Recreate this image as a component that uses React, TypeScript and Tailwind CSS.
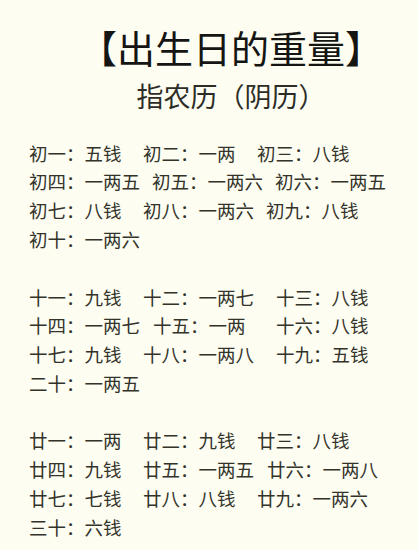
const font = { fontFamily: '"Noto Sans CJK SC", "Noto Sans", sans-serif' };

type Entry = [string, number];

const sections: Entry[][][] = [
  [
    [["初一：五钱", 114], ["初二：一两", 114], ["初三：八钱", 0]],
    [["初四：一两五", 123], ["初五：一两六", 123], ["初六：一两五", 0]],
    [["初七：八钱", 114], ["初八：一两六", 123], ["初九：八钱", 0]],
    [["初十：一两六", 0]],
  ],
  [
    [["十一：九钱", 114], ["十二：一两七", 133], ["十三：八钱", 0]],
    [["十四：一两七", 124], ["十五：一两", 123], ["十六：八钱", 0]],
    [["十七：九钱", 114], ["十八：一两八", 133], ["十九：五钱", 0]],
    [["二十：一两五", 0]],
  ],
  [
    [["廿一：一两", 114], ["廿二：九钱", 114], ["廿三：八钱", 0]],
    [["廿四：九钱", 114], ["廿五：一两五", 124], ["廿六：一两八", 0]],
    [["廿七：七钱", 114], ["廿八：八钱", 114], ["廿九：一两六", 0]],
    [["三十：六钱", 0]],
  ],
];

export default function App() {
  return (
    <div className="h-[550px] w-[418px] overflow-hidden bg-[#fdfdf1] text-[#33332b]" style={font}>
      <div className="pl-[44px]">
        <h1 className="pt-[22px] text-center text-[38px] leading-[50px] font-normal text-[#151513]">【出生日的重量】</h1>
        <h2 className="mt-[2px] text-center text-[27px] leading-[44px] text-[#2d2d28]">指农历（阴历）</h2>
      </div>

      <div className="mt-[21px] flex flex-col gap-[28.8px] pl-[29px]">
        {sections.map((rows, si) => (
          <div key={si} className="flex flex-col">
            {rows.map((row, ri) => (
              <div key={ri} className="flex h-[28.8px] items-center text-[18.5px] whitespace-nowrap">
                {row.map(([text, width], ei) => (
                  <span key={ei} className="shrink-0" style={width ? { width } : undefined}>
                    {text}
                  </span>
                ))}
              </div>
            ))}
          </div>
        ))}
      </div>
    </div>
  );
}
